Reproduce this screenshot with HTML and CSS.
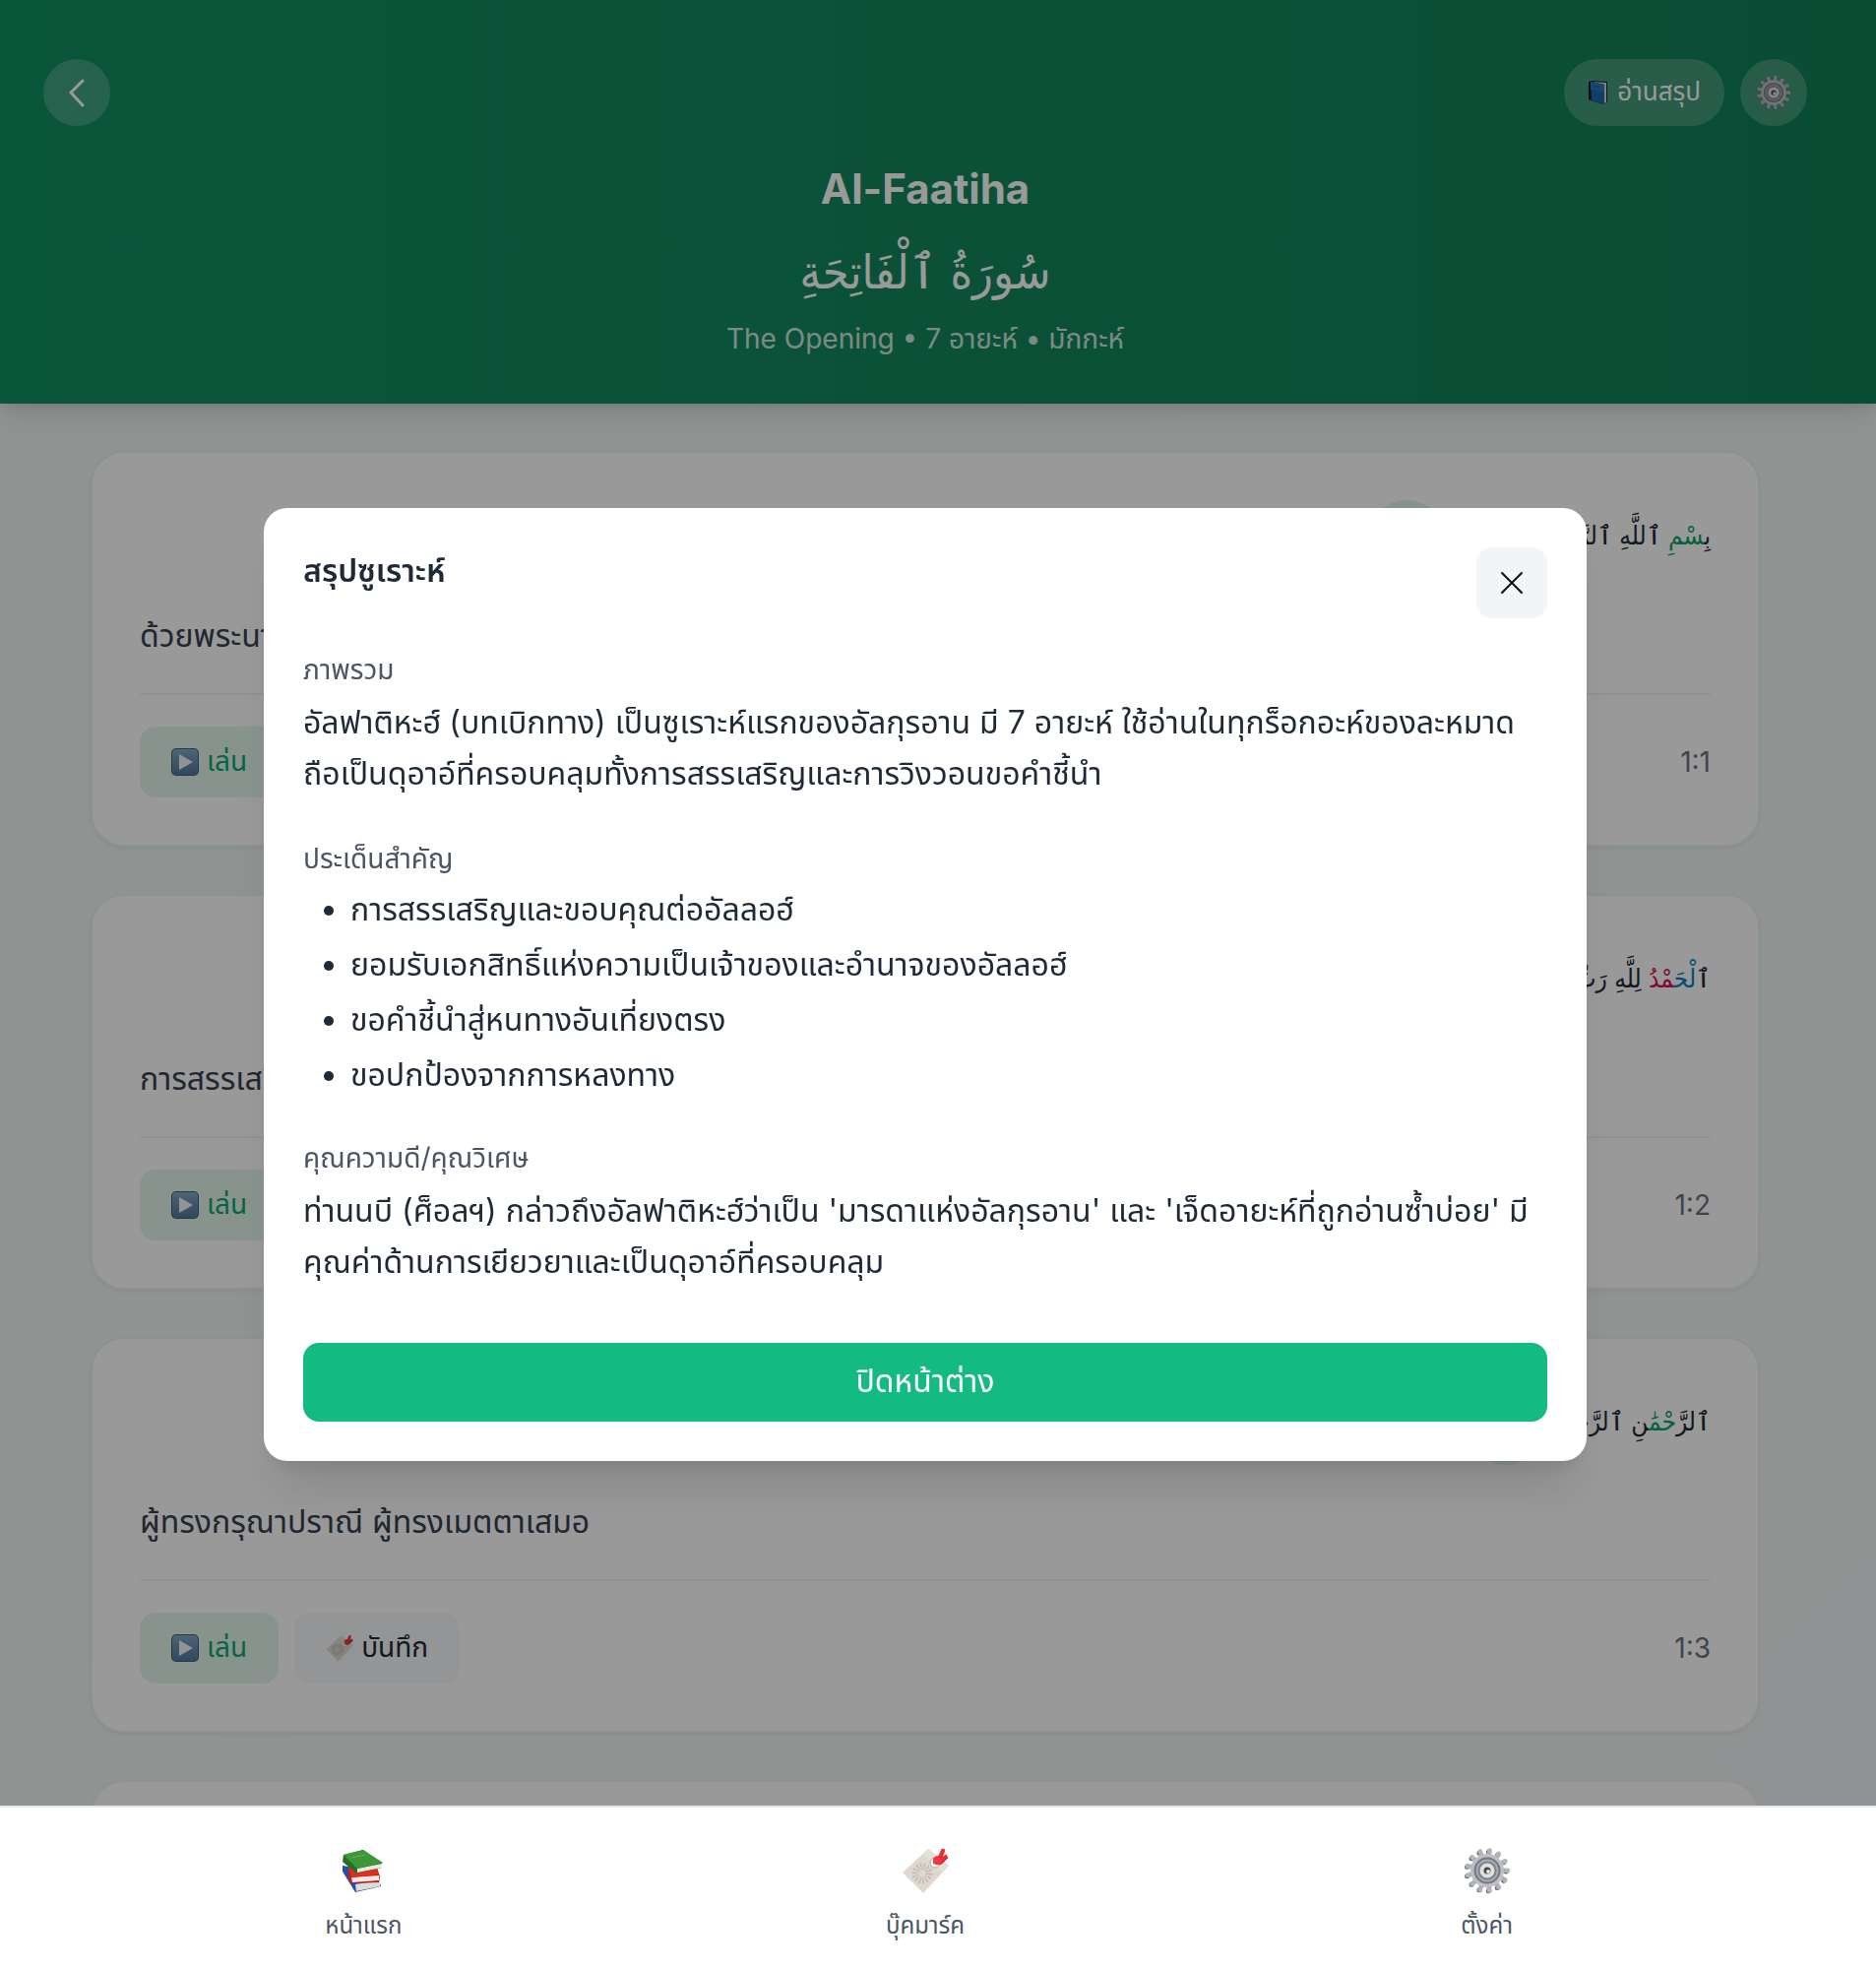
FILE: index.html
```html
<!DOCTYPE html>
<html lang="th">
<head>
<meta charset="utf-8">
<meta name="viewport" content="width=device-width, initial-scale=1">
<title>Al-Faatiha</title>
<link rel="stylesheet" href="styles.css">
</head>
<body>
<svg class="sprite" aria-hidden="true">
  <defs>
    <linearGradient id="play-fill" x1="0" y1="0" x2="0" y2="1"><stop offset="0" stop-color="#88a8c8"/><stop offset="0.35" stop-color="#6f93ba"/><stop offset="1" stop-color="#55799f"/></linearGradient>
    <linearGradient id="metal" x1="0" y1="0" x2="1" y2="1"><stop offset="0" stop-color="#b9bec3"/><stop offset="1" stop-color="#c3bfc6"/></linearGradient>
  </defs>
  <symbol id="gear" viewBox="0 0 48 48">
    <g fill="none" stroke-linecap="round">
      <circle cx="23" cy="25" r="20" stroke="#5d5f64" stroke-width="5" pathLength="13" stroke-dasharray="0 1"/>
      <circle cx="24" cy="24" r="17.500" stroke="#a9adb3" stroke-width="5" pathLength="13" stroke-dasharray="0 1"/>
      <circle cx="24" cy="24" r="20.500" stroke="#b2b5ba" stroke-width="5" pathLength="13" stroke-dasharray="0 1"/>
    </g>
    <circle cx="24" cy="24" r="17" fill="url(#metal)"/>
    <circle cx="24" cy="24" r="13.500" fill="#73797e"/>
    <circle cx="24" cy="24" r="11.500" fill="#a5abb0"/>
    <circle cx="24" cy="24" r="9.500" fill="#7d8388"/>
    <circle cx="24" cy="24" r="7.500" fill="#dde0e3"/>
    <circle cx="24" cy="24" r="3.500" fill="#4d4442"/>
    <circle cx="25" cy="25" r="2" fill="#e8e8e8"/>
  </symbol>
  <symbol id="book" viewBox="0 0 20 24">
    <path d="M1 1 5 0 20 1v21l-4 2-13-4-2-1z" fill="#1d1c2c"/>
    <path d="m4 1 15 1v20l-2 1V4z" fill="#d4d6dd"/>
    <path d="m3 1 14 3v20L4 20z" fill="#1968ad"/>
    <path d="m3 1 14 3v8L3 9z" fill="#2878bd"/>
    <path d="M7 6h5" stroke="#15538c" stroke-width="1"/>
  </symbol>
  <symbol id="play" viewBox="0 0 28 28">
    <rect width="28" height="28" rx="5" fill="#3f5c7b"/>
    <rect x="1" y="1" width="26" height="26" rx="4" fill="url(#play-fill)"/>
    <path d="M8 6v16l14-8z" fill="#f4f5f7"/>
  </symbol>
  <symbol id="tag" viewBox="0 0 48 48">
    <path d="M27 2 48 19 22 47 1 26z" fill="#ded8d0"/>
    <path d="M27 2 22 7l19 19 7-7z" fill="#e4dfd8"/>
    <circle cx="21" cy="27" r="7" fill="none" stroke="#c3bbb2" stroke-width="7" stroke-dasharray="1.400 1.700"/>
    <circle cx="34" cy="16" r="5" fill="#fff" stroke="#b9aea6"/>
    <path d="m33 11 5-2 3-7 3 1-3 8 4-3 2 3-6 6-4 1-3-1z" fill="#e32f34" stroke="#e32f34" stroke-linejoin="round"/>
    <path d="m32 12 4-3 5 6-4 3-5-1z" fill="#ee3a40"/>
  </symbol>
  <symbol id="books" viewBox="0 0 42 44">
    <path d="m0 17 6 1 31 13 2 7-26 6L0 23z" fill="#234eae"/>
    <path d="m13 36 25-4v6l-24 5z" fill="#dcdcd8"/>
    <path d="m6 16 29 3 3 9-1 6-28 1-3-5z" fill="#c41f17"/>
    <path d="m9 29 28-2v5l-27 2z" fill="#ece9e6"/>
    <path d="M6 18 9 29l28-3-3-7z" fill="#e62a1f"/>
    <path d="M1 6 21 1l19 13v5l-26 6L0 13z" fill="#276d24"/>
    <path d="m15 20 25-5v4l-25 5z" fill="#e8ebe4"/>
    <path d="M1 6 21 1l20 13-26 6z" fill="#3c9736"/>
    <path d="M9 9 23 6" stroke="#62b451" stroke-width="1"/>
  </symbol>
</svg>

<div class="page">
  <header class="hero">
    <div class="toolbar">
      <button class="round" aria-label="ย้อนกลับ"><svg class="chevron" viewBox="0 0 18 30"><path d="M15 3 3 15l12 13"/></svg></button>
      <div class="tools">
        <button class="pill"><svg class="icon-book"><use href="#book"/></svg>อ่านสรุป</button>
        <button class="round" aria-label="การตั้งค่า"><svg class="icon-gear"><use href="#gear"/></svg></button>
      </div>
    </div>
    <h1>Al-Faatiha</h1>
    <p class="surah" lang="ar" dir="rtl">سُورَةُ ٱلْفَاتِحَةِ</p>
    <p class="meta">The Opening • 7 อายะห์ • มักกะห์</p>
  </header>

  <main class="verses">
    <article class="card">
      <div class="verse-row"><span class="badge"></span><p class="verse" lang="ar" dir="rtl">بِ<span class="green">سْمِ</span> ٱللَّهِ ٱلرَّ<span class="green">حْمَٰ</span>نِ ٱلرَّحِيمِ</p></div>
      <p class="translation">ด้วยพระนามของอัลลอฮ์ ผู้ทรงกรุณาปราณี ผู้ทรงเมตตาเสมอ</p>
      <div class="actions"><button class="chip play"><svg class="icon-chip"><use href="#play"/></svg>เล่น</button><button class="chip save"><svg class="icon-chip"><use href="#tag"/></svg>บันทึก</button><span class="ref">1:1</span></div>
    </article>
    <article class="card">
      <div class="verse-row"><span class="badge"></span><p class="verse" lang="ar" dir="rtl">ٱ<span class="blue">لْحَ</span><span class="red">مْدُ</span> لِلَّهِ رَبِّ ٱلْعَٰلَمِينَ</p></div>
      <p class="translation">การสรรเสริญทั้งหลายเป็นสิทธิของอัลลอฮ์</p>
      <div class="actions"><button class="chip play"><svg class="icon-chip"><use href="#play"/></svg>เล่น</button><button class="chip save"><svg class="icon-chip"><use href="#tag"/></svg>บันทึก</button><span class="ref">1:2</span></div>
    </article>
    <article class="card">
      <div class="verse-row"><span class="badge"></span><p class="verse" lang="ar" dir="rtl">ٱلرَّ<span class="green">حْمَٰ</span>نِ ٱلرَّحِيمِ</p></div>
      <p class="translation">ผู้ทรงกรุณาปราณี ผู้ทรงเมตตาเสมอ</p>
      <div class="actions"><button class="chip play"><svg class="icon-chip"><use href="#play"/></svg>เล่น</button><button class="chip save"><svg class="icon-chip"><use href="#tag"/></svg>บันทึก</button><span class="ref">1:3</span></div>
    </article>
    <article class="card">
      <div class="verse-row"></div>
    </article>
  </main>
</div>

<div class="overlay">
  <section class="modal" role="dialog" aria-modal="true" aria-labelledby="modal-title">
    <div class="modal-head">
      <h2 id="modal-title">สรุปซูเราะห์</h2>
      <button class="close" aria-label="ปิด"><svg viewBox="0 0 24 24"><path d="m2 2 20 20M22 2 2 22"/></svg></button>
    </div>
    <div class="sections">
      <section>
        <h3>ภาพรวม</h3>
        <p>อัลฟาติหะฮ์ (บทเบิกทาง) เป็นซูเราะห์แรกของอัลกุรอาน มี 7 อายะห์ ใช้อ่านในทุกร็อกอะห์ของละหมาด<br>ถือเป็นดุอาอ์ที่ครอบคลุมทั้งการสรรเสริญและการวิงวอนขอคำชี้นำ</p>
      </section>
      <section>
        <h3>ประเด็นสำคัญ</h3>
        <ul>
          <li>การสรรเสริญและขอบคุณต่ออัลลอฮ์</li>
          <li>ยอมรับเอกสิทธิ์แห่งความเป็นเจ้าของและอำนาจของอัลลอฮ์</li>
          <li>ขอคำชี้นำสู่หนทางอันเที่ยงตรง</li>
          <li>ขอปกป้องจากการหลงทาง</li>
        </ul>
      </section>
      <section>
        <h3>คุณความดี/คุณวิเศษ</h3>
        <p>ท่านนบี (ศ็อลฯ) กล่าวถึงอัลฟาติหะฮ์ว่าเป็น 'มารดาแห่งอัลกุรอาน' และ 'เจ็ดอายะห์ที่ถูกอ่านซ้ำบ่อย' มี<br>คุณค่าด้านการเยียวยาและเป็นดุอาอ์ที่ครอบคลุม</p>
      </section>
    </div>
    <button class="dismiss">ปิดหน้าต่าง</button>
  </section>
</div>

<nav class="tabs">
  <a href="#home"><svg class="icon-books"><use href="#books"/></svg>หน้าแรก</a>
  <a href="#bookmarks"><svg class="icon-tab"><use href="#tag"/></svg>บุ๊คมาร์ค</a>
  <a href="#settings"><svg class="icon-tab"><use href="#gear"/></svg>ตั้งค่า</a>
</nav>
</body>
</html>
```

FILE: styles.css
```css
* { box-sizing: border-box; }
html, body { height: 100%; }
body {
  margin: 0;
  overflow: hidden;
  background: linear-gradient(135deg, #eef7f3, #f1f6f5);
  color: #1f2937;
  font-family: Inter, "Noto Sans Thai", "Noto Sans", sans-serif;
  font-size: 32px;
}
h1, h2, h3, p, ul { margin: 0; }
button { border: 0; font: inherit; color: inherit; padding: 0; }
svg { display: block; flex: none; }
.sprite { position: absolute; width: 0; height: 0; }

.hero {
  padding: 60px 70px 46px 44px;
  background: linear-gradient(90deg, #128f63, #128059);
  color: #fff;
  text-align: center;
  box-shadow: 0 16px 30px -6px rgba(0, 0, 0, 0.1), 0 4px 10px rgba(0, 0, 0, 0.08);
}
.toolbar { display: flex; justify-content: space-between; }
.tools { display: flex; gap: 16px; }
.round, .pill {
  display: flex;
  align-items: center;
  justify-content: center;
  height: 68px;
  border-radius: 34px;
  background: rgba(255, 255, 255, 0.2);
}
.round { width: 68px; }
.pill { gap: 10px; padding: 0 24px; font-size: 26px; }
.chevron { width: 18px; height: 30px; fill: none; stroke: #fff; stroke-width: 3; stroke-linecap: round; stroke-linejoin: round; }
.icon-book { width: 20px; height: 24px; }
.icon-gear { width: 36px; height: 36px; }
h1 { margin-top: 36px; font-size: 42px; line-height: 56px; }
.surah { margin-top: 12px; height: 88px; font-family: "DejaVu Sans Condensed", "DejaVu Sans", sans-serif; font-size: 48px; line-height: 88px; }
.meta { margin-top: 4px; font-size: 28px; line-height: 40px; opacity: 0.8; }

.verses { display: flex; flex-direction: column; gap: 48px; padding: 48px 118px 48px 92px; }
.card {
  padding: 48px;
  border: 2px solid #eaf3ef;
  border-radius: 34px;
  background: #fff;
  box-shadow: 0 2px 4px rgba(0, 0, 0, 0.06);
}
.verse-row { display: flex; justify-content: flex-end; gap: 8px; min-height: 80px; }
.badge { width: 80px; height: 80px; border-radius: 50%; background: #dff5ec; }
.verse { font-family: "DejaVu Sans Condensed", "DejaVu Sans", sans-serif; font-size: 26px; line-height: 72px; height: 80px; white-space: nowrap; }
.green { color: #07a56a; }
.blue { color: #0b7fc4; }
.red { color: #e00b4f; }
.translation { margin: 32px 0; color: #374151; line-height: 52px; }
.actions { display: flex; gap: 16px; align-items: center; border-top: 2px solid #f3f4f6; padding-top: 32px; }
.chip { display: flex; align-items: center; gap: 8px; height: 72px; padding: 0 32px; border-radius: 16px; font-size: 28px; }
.play { background: #e3f6ed; color: #0aa86e; }
.save { background: #f7f8fb; }
.icon-chip { width: 28px; height: 28px; }
.ref { margin-left: auto; color: #6b7280; font-size: 28px; }

.overlay {
  position: fixed;
  inset: 0;
  display: flex;
  align-items: center;
  justify-content: center;
  padding: 32px 58px 32px 32px;
  background: rgba(0, 0, 0, 0.4);
}
.modal {
  width: 100%;
  max-width: 1344px;
  padding: 40px;
  border-radius: 24px;
  background: #fff;
  box-shadow: 0 40px 50px -10px rgba(0, 0, 0, 0.1), 0 16px 20px -12px rgba(0, 0, 0, 0.1);
}
.modal-head { display: flex; justify-content: space-between; margin-bottom: 32px; }
h2 { font-size: 32px; font-weight: 600; line-height: 48px; }
.close { display: grid; place-items: center; width: 72px; height: 72px; border-radius: 16px; background: #f3f4f6; }
.close svg { width: 24px; height: 24px; fill: none; stroke: #111; stroke-width: 2; stroke-linecap: round; }
.sections { display: flex; flex-direction: column; gap: 40px; }
h3 { margin-bottom: 8px; color: #4b5563; font-size: 28px; font-weight: 400; line-height: 40px; }
.sections p { line-height: 52px; white-space: nowrap; }
ul { display: flex; flex-direction: column; gap: 8px; padding-left: 48px; }
li { line-height: 48px; }
.dismiss { width: 100%; height: 80px; margin-top: 56px; border-radius: 16px; background: #13ba81; color: #fff; }

.tabs {
  position: fixed;
  inset: auto 0 0;
  display: grid;
  grid-template-columns: repeat(3, 1fr);
  height: 166px;
  padding: 40px 110px 0 84px;
  border-top: 2px solid #e5e7eb;
  background: #fff;
}
.tabs a { display: flex; flex-direction: column; align-items: center; gap: 16px; color: #4b5563; font-size: 24px; line-height: 32px; text-decoration: none; }
.icon-tab { width: 48px; height: 48px; }
.icon-books { width: 42px; height: 48px; }
```
